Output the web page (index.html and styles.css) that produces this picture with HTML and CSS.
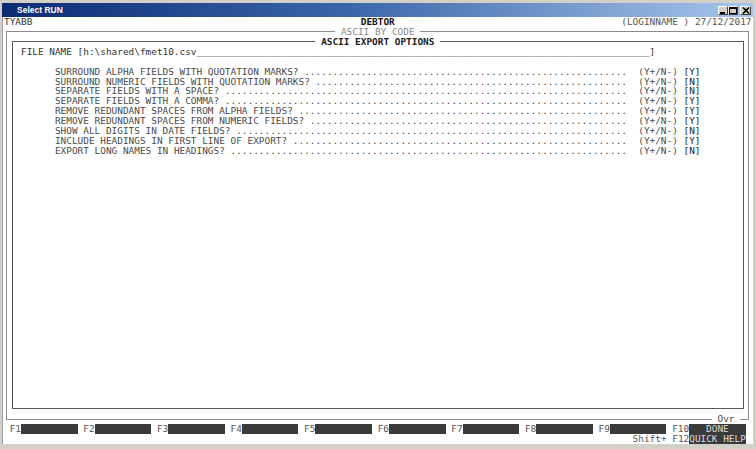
FILE: index.html
```
<!DOCTYPE html>
<html lang="en">
<head>
    <meta charset="UTF-8">
    <title>Select RUN</title>
    <link rel="stylesheet" href="styles.css">
</head>
<body>
    <div class="window">
        <div class="titlebar">
            <span class="title">Select RUN</span>
            <div class="controls">
                <span class="ctl"><svg width="8" height="7" viewBox="0 0 8 7"><rect x="1" y="5" width="5" height="2" fill="#000"/></svg></span>
                <span class="ctl"><svg width="8" height="7" viewBox="0 0 8 7"><rect x="0.5" y="0.5" width="7" height="6" fill="none" stroke="#000"/><rect x="0" y="0" width="8" height="2" fill="#000"/></svg></span>
                <span class="ctl ctl-close"><svg width="8" height="7" viewBox="0 0 8 7"><path d="M1 0.5 L7 6.5 M7 0.5 L1 6.5" stroke="#000" stroke-width="1.6"/></svg></span>
            </div>
        </div>

        <div class="screen">
            <div class="row head">
                <span class="head-left">TYABB</span>
                <span class="head-center">DEBTOR</span>
                <span class="head-right">(LOGINNAME ) 27/12/2017</span>
            </div>

            <div class="box outer">
                <div class="box-title"><span class="title-muted">ASCII BY CODE</span></div>

                <div class="box inner">
                    <div class="box-title"><span class="title-strong">ASCII EXPORT OPTIONS</span></div>

                    <div class="row file">FILE NAME [h:\shared\fmet10.csv________________________________________________________________________________]</div>
                    <div class="row"></div>

                    <div class="options">
                        <div class="row opt"><span>SURROUND ALPHA FIELDS WITH QUOTATION MARKS? </span><span class="leader"></span><span>  (Y+/N-) </span><span class="opt-val">[Y]</span></div>
                        <div class="row opt"><span>SURROUND NUMERIC FIELDS WITH QUOTATION MARKS? </span><span class="leader"></span><span>  (Y+/N-) </span><span class="opt-val">[N]</span></div>
                        <div class="row opt"><span>SEPARATE FIELDS WITH A SPACE? </span><span class="leader"></span><span>  (Y+/N-) </span><span class="opt-val">[N]</span></div>
                        <div class="row opt"><span>SEPARATE FIELDS WITH A COMMA? </span><span class="leader"></span><span>  (Y+/N-) </span><span class="opt-val">[Y]</span></div>
                        <div class="row opt"><span>REMOVE REDUNDANT SPACES FROM ALPHA FIELDS? </span><span class="leader"></span><span>  (Y+/N-) </span><span class="opt-val">[Y]</span></div>
                        <div class="row opt"><span>REMOVE REDUNDANT SPACES FROM NUMERIC FIELDS? </span><span class="leader"></span><span>  (Y+/N-) </span><span class="opt-val">[Y]</span></div>
                        <div class="row opt"><span>SHOW ALL DIGITS IN DATE FIELDS? </span><span class="leader"></span><span>  (Y+/N-) </span><span class="opt-val">[N]</span></div>
                        <div class="row opt"><span>INCLUDE HEADINGS IN FIRST LINE OF EXPORT? </span><span class="leader"></span><span>  (Y+/N-) </span><span class="opt-val">[Y]</span></div>
                        <div class="row opt"><span>EXPORT LONG NAMES IN HEADINGS? </span><span class="leader"></span><span>  (Y+/N-) </span><span class="opt-val">[N]</span></div>
                    </div>
                </div>

                <div class="box-foot"><span>Ovr</span></div>
            </div>

            <div class="row fkeys">
                <span class="fk">F1<span class="bar"></span></span>
                <span class="fk">F2<span class="bar"></span></span>
                <span class="fk">F3<span class="bar"></span></span>
                <span class="fk">F4<span class="bar"></span></span>
                <span class="fk">F5<span class="bar"></span></span>
                <span class="fk">F6<span class="bar"></span></span>
                <span class="fk">F7<span class="bar"></span></span>
                <span class="fk">F8<span class="bar"></span></span>
                <span class="fk">F9<span class="bar"></span></span>
                <span class="fk">F10<span class="bar bar-lit">DONE</span></span>
            </div>
            <div class="row fkeys-shift">
                <span>Shift+ F12</span><span class="bar bar-lit">QUICK HELP</span>
            </div>
        </div>
    </div>
</body>
</html>
```

FILE: styles.css
```
:root {
    --rh: 9.93px;
    --frame: #d4d0c8;
    --text: #4a4a4a;
    --line-outer: #8a8a8a;
    --line-inner: #5a5a5a;
    --bar: #3a3a3a;
}

* {
    margin: 0;
    padding: 0;
    box-sizing: border-box;
}

body {
    background-color: var(--frame);
}

.window {
    width: 756px;
    height: 449px;
    padding: 3px 3px 0 2px;
    background-color: var(--frame);
    overflow: hidden;
}

/* Barra de titulo */
.titlebar {
    height: 14px;
    display: flex;
    align-items: center;
    justify-content: space-between;
    padding: 0 2px 0 15px;
    background: linear-gradient(to right, #0c2b74, #3a64a8 45%, #a8c6ec);
}

.title {
    color: white;
    font: bold 8.5px "Liberation Sans", Arial, sans-serif;
    line-height: 14px;
}

.controls {
    display: flex;
}

.ctl {
    width: 10px;
    height: 9px;
    display: flex;
    align-items: center;
    justify-content: center;
    background-color: var(--frame);
    border: 1px solid;
    border-color: #fff #404040 #404040 #fff;
}

.ctl svg {
    display: block;
}

.ctl-close {
    width: 11px;
    margin-left: 2px;
}

/* Tela do terminal */
.screen {
    height: calc(43 * var(--rh));
    width: 751px;
    padding-left: 1px;
    background-color: white;
    border-left: 1px solid #a0a0a0;
    font-family: "DejaVu Sans Mono", monospace;
    font-size: 9.413px;
    line-height: var(--rh);
    color: var(--text);
}

.row {
    height: var(--rh);
    white-space: pre;
}

.head {
    display: grid;
    grid-template-columns: 1fr auto 1fr;
    width: 132ch;
}

.head-left {
    color: #333;
}

.head-center {
    color: #111;
    font-weight: bold;
}

.head-right {
    text-align: right;
    color: #555;
}

/* Caixas desenhadas */
.box {
    display: flex;
    flex-direction: column;
}

.outer {
    --line: var(--line-outer);
    width: calc(131ch + 1px);
    height: calc(39 * var(--rh));
    margin: calc(var(--rh) / 2) 0 calc(var(--rh) / 2) calc(0.5ch - 0.5px);
    border-left: 1px solid var(--line);
    border-right: 1px solid var(--line);
}

.inner {
    --line: var(--line-inner);
    width: calc(129ch + 1px);
    height: calc(37 * var(--rh));
    margin: calc(var(--rh) / 2) 0 0 calc(1ch - 1px);
    border: 1px solid var(--line);
    border-top: none;
}

.box-title,
.box-foot {
    display: flex;
    align-items: center;
    height: var(--rh);
    flex-shrink: 0;
    margin: calc(var(--rh) / -2) -1px 0;
}

.box-title::before,
.box-title::after,
.box-foot::before,
.box-foot::after {
    content: "";
    flex: 1;
    border-top: 1px solid var(--line);
}

.box-title span,
.box-foot span {
    padding: 0 1ch;
}

.box-foot {
    margin: calc(var(--rh) / 2) -1px calc(var(--rh) / -2);
}

.box-foot::after {
    flex: none;
    width: calc(1.5ch + 0.5px);
}

.title-muted {
    color: #8a8a8a;
}

.title-strong {
    color: #222;
    font-weight: bold;
}

.file {
    padding-left: calc(1.5ch - 0.5px);
    color: #333;
}

.options {
    padding-left: calc(7.5ch - 0.5px);
}

.opt {
    display: flex;
    width: 114ch;
}

.leader {
    flex: 1;
    min-width: 0;
    overflow: hidden;
}

.leader::before {
    content: "........................................................................................................................";
}

.opt-val {
    color: #222;
}

/* Teclas de funcao */
.fkeys {
    display: flex;
    padding-left: 1ch;
    color: #555;
}

.fk {
    display: flex;
    width: 13ch;
}

.bar {
    display: block;
    width: 10ch;
    height: var(--rh);
    background-color: var(--bar);
    text-align: center;
}

.bar-lit {
    color: #ddd;
}

.fkeys-shift {
    display: flex;
    justify-content: flex-end;
    width: 131ch;
    color: #555;
}
```
